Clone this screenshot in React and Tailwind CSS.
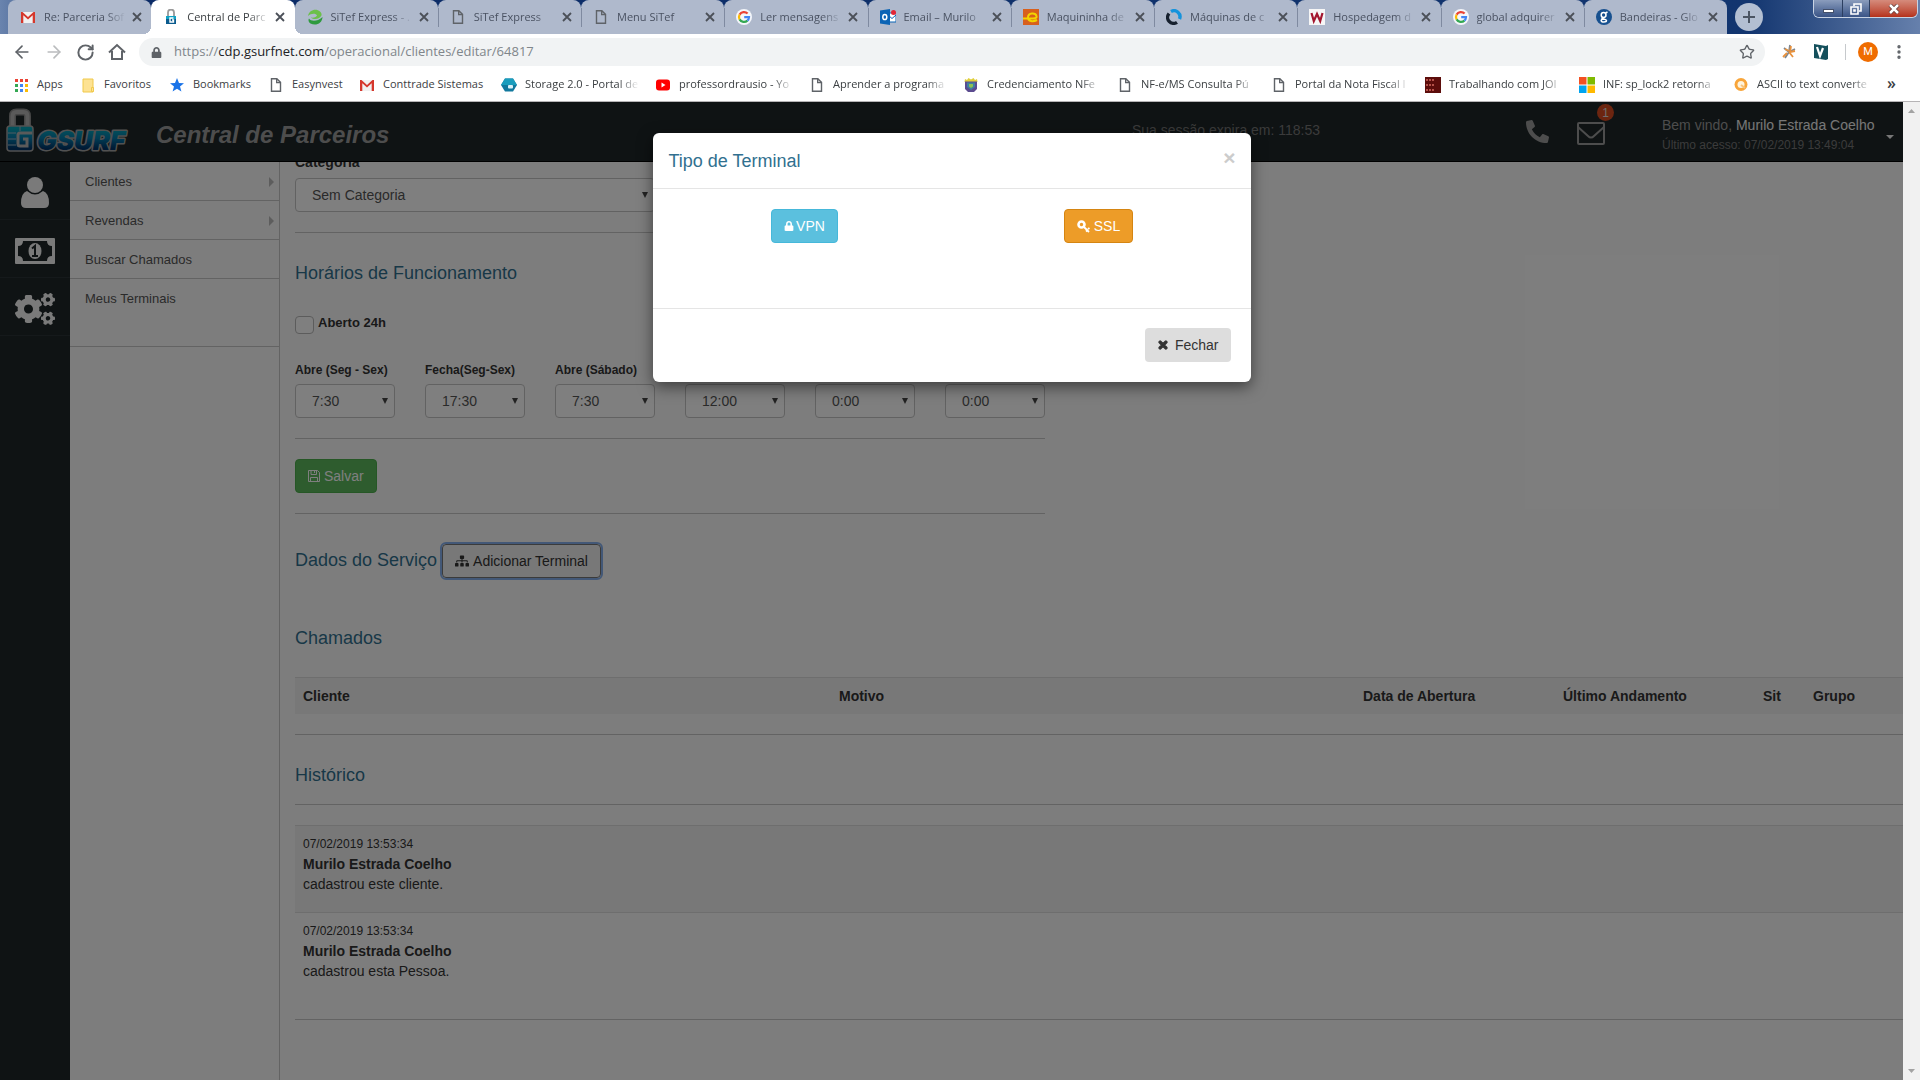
import { useState } from 'react';
import { FaUser, FaCogs, FaPhone, FaSitemap, FaLock, FaTimes } from 'react-icons/fa';
import { ArrowLeft, ArrowRight, RotateCw, Star, EllipsisVertical } from 'lucide-react';

// Favicons
const PageIcon = () => (
  <svg width="16" height="16" viewBox="0 0 16 16" fill="none" stroke="#5f6368" strokeWidth="1.4">
    <path d="M3.5 1.7h5.3l3.7 3.7v8.9h-9z" />
    <path d="M8.7 1.7v3.9h3.8" />
  </svg>
);

const GmailIcon = () => (
  <svg width="16" height="16" viewBox="0 0 16 16">
    <path d="M1 3h14v11H1z" fill="#f1f1f1" />
    <path d="M1 14V3h1.5L8 8l5.5-5H15v11h-2.3V6.3L8 10.5 3.3 6.3V14z" fill="#d5372c" />
  </svg>
);

const GoogleIcon = () => (
  <svg width="16" height="16" viewBox="0 0 16 16">
    <circle cx="8" cy="8" r="8" fill="#f4f6fa" />
    <g fill="none" strokeWidth="2.2">
      <path d="M11.6 4.6A5 5 0 0 0 3.6 5.6" stroke="#ea4335" />
      <path d="M3.6 5.6a5 5 0 0 0 0 4.8" stroke="#fbbc05" />
      <path d="M3.6 10.4a5 5 0 0 0 7.8 1.2" stroke="#34a853" />
      <path d="M11.4 11.6A5 5 0 0 0 13 8.2H8.2" stroke="#4285f4" />
    </g>
  </svg>
);

const PadlockIcon = () => (
  <svg width="16" height="16" viewBox="0 0 16 16">
    <path d="M5 7V3.5a3 3 0 0 1 6 0V7" fill="none" stroke="#9a9a9a" strokeWidth="1.8" />
    <path d="M3 7h10v8H3z" fill="#0b5b8e" />
    <path d="M3 7h10v3H3z" fill="#11a2c4" />
    <path d="M10.5 9H7v4h3.5v-2H9" fill="none" stroke="#fff" strokeWidth="1.4" />
  </svg>
);

const SitefIcon = () => (
  <svg width="16" height="16" viewBox="0 0 16 16">
    <path d="M1 7C2 1 9-1 13 2.500c2.500 2.500 2 4.500-1 6.500-2.500 1.500-6 1.500-8-.5 3 .5 5.500-.5 6-2C9 4 4 4 1 7z" fill="#6cc04a" />
    <path d="M15.500 8C15.500 14 9 17.500 3.500 14.500 1.500 13 1 11 2 9.500c2 3 8 3.500 13.500-1.500z" fill="#2f9a3f" />
  </svg>
);

const OutlookIcon = () => (
  <svg width="16" height="16" viewBox="0 0 16 16">
    <path d="M8 4h8v9H8z" fill="#fff" stroke="#0b64b5" />
    <path d="M8 6l4 3.500L16 6" fill="none" stroke="#0b64b5" />
    <path d="M0 1.500L10 0v16L0 14.500z" fill="#0b64b5" />
    <ellipse cx="4.800" cy="8" rx="2" ry="2.600" fill="none" stroke="#fff" strokeWidth="1.500" />
    <circle cx="13.500" cy="3.500" r="2.500" fill="#e32636" />
  </svg>
);

const MaquininhaIcon = () => (
  <svg width="16" height="16" viewBox="0 0 16 16">
    <path d="M0 0h16v16H0z" fill="#d8601c" />
    <path d="M0 9.500h10c3 0 4-1 3.500-2.500C12.500 3.500 5 3.500 5 8.500c0 4 5 4.500 9 2.500" fill="none" stroke="#f2d400" strokeWidth="2" />
  </svg>
);

const RingIcon = () => (
  <svg width="16" height="16" viewBox="0 0 16 16" fill="none" strokeWidth="3.400">
    <path d="M5 2.500A6 6 0 0 1 13.500 10" stroke="#1593dc" />
    <path d="M3 4.500A6 6 0 0 0 11 13.300" stroke="#16202e" />
  </svg>
);

const HostIcon = () => (
  <svg width="16" height="16" viewBox="0 0 16 16">
    <path d="M0 0h16v16H0z" fill="#f6f6f6" />
    <path d="M2.500 4l2.300 8L8 5l3.200 7 2.300-8" fill="none" stroke="#a3162e" strokeWidth="2.200" />
  </svg>
);

const GlobalIcon = () => (
  <svg width="16" height="16" viewBox="0 0 16 16">
    <circle cx="8" cy="8" r="8" fill="#17508f" />
    <g fill="none" stroke="#fff" strokeWidth="1.500">
      <circle cx="7.600" cy="6" r="2.400" />
      <path d="M9.500 4l2-1M6 8.500c-1 1.800 4.500 1 4.500 3s-5.500 2-5.300.2C5.300 10.500 6.500 10 8 10" />
    </g>
  </svg>
);

const AppsIcon = () => (
  <svg width="16" height="16" viewBox="0 0 16 16">
    {["#ea4335", "#ea4335", "#ea4335", "#34a853", "#4285f4", "#fbbc05", "#34a853", "#4285f4", "#fbbc05"].map((fill, i) => (
      <rect key={i} x={2 + (i % 3) * 5} y={2 + Math.floor(i / 3) * 5} width="3" height="3" fill={fill} />
    ))}
  </svg>
);

const FolderIcon = () => (
  <svg width="16" height="16" viewBox="0 0 16 16">
    <path d="M3 2h10v13H3z" fill="#fde293" stroke="#f0c94b" />
    <path d="M11.500 10.500h2v4h-2z" fill="#fde293" stroke="#f0c94b" />
  </svg>
);

const BlueStarIcon = () => (
  <svg width="16" height="16" viewBox="0 0 16 16" fill="#1a73e8">
    <path d="M8 1l2 5 5 .3-4 3.300 1.400 5L8 11.800l-4.400 2.800 1.400-5-4-3.300L6 6z" />
  </svg>
);

const HexIcon = () => (
  <svg width="16" height="16" viewBox="0 0 16 16">
    <path d="M4 1.500h8L16 8l-4 6.500H4L0 8z" fill="#11789d" />
    <path d="M4 1.500h8L16 8H0z" fill="#1a9dbd" />
    <rect x="7" y="8" width="5" height="3.500" rx="1" fill="#d9f1f8" />
  </svg>
);

const YoutubeIcon = () => (
  <svg width="16" height="16" viewBox="0 0 16 16">
    <rect x="1" y="2.500" width="14" height="11" rx="3" fill="#f00" />
    <path d="M6.500 5.500v5l4-2.500z" fill="#fff" />
  </svg>
);

const CrestIcon = () => (
  <svg width="16" height="16" viewBox="0 0 16 16">
    <path d="M1.500 5L2 2l2 1 1.500-2L8 2.500 10.500 1 12 3l2-1 .5 3z" fill="#e0cf3c" />
    <path d="M2 4.500h12V12l-3 3H5l-3-3z" fill="#5b4b8f" />
    <path d="M4 5.500h8V10l-4 3-4-3z" fill="#3f7fa0" />
    <path d="M6 7h4v2.500L8 11 6 9.500z" fill="#8cc152" />
  </svg>
);

const SqlIcon = () => (
  <svg width="16" height="16" viewBox="0 0 16 16">
    <path d="M0 0h16v16H0z" fill="#5c0d0b" />
    <path d="M1 3h8M1 8h9M1 13h8" stroke="#b5524a" strokeWidth="2" strokeDasharray="2 1" />
  </svg>
);

const WindowsIcon = () => (
  <svg width="16" height="16" viewBox="0 0 16 16">
    <path d="M0 0h7.500v7.500H0z" fill="#f25022" />
    <path d="M8.500 0H16v7.500H8.500z" fill="#7fba00" />
    <path d="M0 8.500h7.500V16H0z" fill="#00a4ef" />
    <path d="M8.500 8.500H16V16H8.500z" fill="#ffb900" />
  </svg>
);

const AsciiIcon = () => (
  <svg width="16" height="16" viewBox="0 0 16 16">
    <circle cx="8" cy="7.500" r="6.500" fill="#f8a53a" />
    <circle cx="8" cy="7.500" r="3.500" fill="#fff3dc" />
    <path d="M8 8l4 3" stroke="#f8c37a" strokeWidth="2" />
  </svg>
);

const tabs = [
  { title: "Re: Parceria Sof", icon: GmailIcon },
  { title: "Central de Parc", icon: PadlockIcon, active: true },
  { title: "SiTef Express - .", icon: SitefIcon },
  { title: "SiTef Express", icon: PageIcon, divider: true },
  { title: "Menu SiTef", icon: PageIcon, divider: true },
  { title: "Ler mensagens", icon: GoogleIcon, divider: true },
  { title: "Email – Murilo", icon: OutlookIcon, divider: true },
  { title: "Maquininha de", icon: MaquininhaIcon, divider: true },
  { title: "Máquinas de c", icon: RingIcon, divider: true },
  { title: "Hospedagem d", icon: HostIcon, divider: true },
  { title: "global adquirer", icon: GoogleIcon, divider: true },
  { title: "Bandeiras - Glo", icon: GlobalIcon, divider: true },
];

const bookmarks = [
  { title: "Apps", icon: AppsIcon, width: "w-[67px]" },
  { title: "Favoritos", icon: FolderIcon, width: "w-[89px]" },
  { title: "Bookmarks", icon: BlueStarIcon, width: "w-[99px]" },
  { title: "Easynvest", icon: PageIcon, width: "w-[91px]" },
  { title: "Conttrade Sistemas", icon: GmailIcon, width: "w-[142px]" },
  { title: "Storage 2.0 - Portal de", icon: HexIcon, width: "w-[154px]", fade: true },
  { title: "professordrausio - Yo", icon: YoutubeIcon, width: "w-[154px]", fade: true },
  { title: "Aprender a programa", icon: PageIcon, width: "w-[154px]", fade: true },
  { title: "Credenciamento NFe", icon: CrestIcon, width: "w-[154px]", fade: true },
  { title: "NF-e/MS Consulta Pú", icon: PageIcon, width: "w-[154px]", fade: true },
  { title: "Portal da Nota Fiscal I", icon: PageIcon, width: "w-[154px]", fade: true },
  { title: "Trabalhando com JOI", icon: SqlIcon, width: "w-[154px]", fade: true },
  { title: "INF: sp_lock2 retorna", icon: WindowsIcon, width: "w-[154px]", fade: true },
  { title: "ASCII to text converte", icon: AsciiIcon, width: "w-[146px]", fade: true },
];

const menuItems = [
  { title: "Clientes", submenu: true },
  { title: "Revendas", submenu: true },
  { title: "Buscar Chamados" },
  { title: "Meus Terminais" },
];

const hours = [
  { label: "Abre (Seg - Sex)", value: "7:30" },
  { label: "Fecha(Seg-Sex)", value: "17:30" },
  { label: "Abre (Sábado)", value: "7:30" },
  { label: "Fecha (Sábado)", value: "12:00" },
  { label: "Abre (Domingo)", value: "0:00" },
  { label: "Fecha (Domingo)", value: "0:00" },
];

const history = [
  { date: "07/02/2019 13:53:34", user: "Murilo Estrada Coelho", text: "cadastrou este cliente." },
  { date: "07/02/2019 13:53:34", user: "Murilo Estrada Coelho", text: "cadastrou esta Pessoa." },
];

function TabStrip() {
  return (
    <div className="flex h-[34px] items-start bg-[linear-gradient(to_right,#6a84ae,#0a2a66_5%,#12356f_91%,#6680ac)]">
      <div className="flex w-[1727px] min-w-0 pl-2">
        {tabs.map((tab) => (
          <div
            key={tab.title}
            className={`relative flex h-[34px] min-w-0 flex-1 items-center rounded-t-lg pl-3 ${
              tab.active
                ? "z-10 bg-white text-[#3c4043] before:absolute before:bottom-0 before:-left-2 before:size-2 before:bg-[radial-gradient(circle_at_0_0,transparent_8px,#fff_8px)] after:absolute after:-right-2 after:bottom-0 after:size-2 after:bg-[radial-gradient(circle_at_100%_0,transparent_8px,#fff_8px)]"
                : "bg-[#afb9cc] text-[#4a5262]"
            }`}
          >
            {tab.divider && <span className="absolute left-0 top-2 h-[19px] w-px bg-[#7f8aa0]" />}
            <span className="shrink-0"><tab.icon /></span>
            <span className="ml-2 w-[82px] overflow-hidden whitespace-nowrap [mask-image:linear-gradient(to_right,black_75%,transparent)]">
              {tab.title}
            </span>
            <button aria-label="Fechar guia" className="ml-1.5">
              <svg width="10" height="10" viewBox="0 0 10 10" stroke="#4b5058" strokeWidth="1.800">
                <path d="M1 1l8 8M9 1l-8 8" />
              </svg>
            </button>
          </div>
        ))}
      </div>
      <button aria-label="Nova guia" className="ml-2 mt-[3px] flex size-7 shrink-0 items-center justify-center rounded-full bg-[#b3bfd2]">
        <svg width="14" height="14" viewBox="0 0 14 14" stroke="#4b5563" strokeWidth="2">
          <path d="M7 1v12M1 7h12" />
        </svg>
      </button>
      <div className="ml-auto mr-[2px] flex h-[18px] shrink-0 overflow-hidden rounded-b-md border border-t-0 border-[#c8d3e4]">
        <button aria-label="Minimizar" className="flex w-[29px] items-center justify-center border-r border-[#2c3f61] bg-linear-to-b from-[#8b9dbd] to-[#3a5486]">
          <span className="mt-1 h-[4px] w-[11px] border border-[#44506a] bg-white" />
        </button>
        <button aria-label="Restaurar" className="flex w-[27px] items-center justify-center border-r border-[#2c3f61] bg-linear-to-b from-[#8b9dbd] to-[#3a5486]">
          <svg width="12" height="12" viewBox="0 0 12 12" fill="none" stroke="#fff" strokeWidth="1.600">
            <path d="M4 3V1h7v7H9M1 4h7v7H1zM4 7h1v1H4z" />
          </svg>
        </button>
        <button aria-label="Fechar" className="flex w-[47px] items-center justify-center bg-linear-to-b from-[#d58b7c] to-[#b5301a]">
          <svg width="12" height="10" viewBox="0 0 12 10">
            <path d="M2 1l8 8M10 1L2 9" stroke="#5b3433" strokeWidth="4" />
            <path d="M2 1l8 8M10 1L2 9" stroke="#fff" strokeWidth="2.500" />
          </svg>
        </button>
      </div>
    </div>
  );
}

function Toolbar() {
  const [url, setUrl] = useState("https://cdp.gsurfnet.com/operacional/clientes/editar/64817");
  const [editing, setEditing] = useState(false);

  return (
    <div className="flex h-9 items-center bg-white pl-3 text-[#5f6368]">
      <div className="flex gap-3">
        <button aria-label="Voltar"><ArrowLeft size={20} /></button>
        <button aria-label="Avançar" className="text-[#babcbe]"><ArrowRight size={20} /></button>
        <button aria-label="Recarregar"><RotateCw size={19} strokeWidth={2.5} /></button>
        <button aria-label="Página inicial">
          <svg width="20" height="20" viewBox="0 0 20 20" fill="none" stroke="currentColor" strokeWidth="2">
            <path d="M2 10.500L10 3l8 7.500M5 9v8h10V9" />
          </svg>
        </button>
      </div>
      <div className="ml-3 flex h-7 flex-1 items-center rounded-full bg-[#f1f3f4] pl-3">
        <FaLock size={11} />
        {editing ? (
          <input
            aria-label="Endereço"
            autoFocus
            value={url}
            onChange={(e) => setUrl(e.target.value)}
            onBlur={() => setEditing(false)}
            className="ml-3 flex-1 bg-transparent text-[13px] outline-none"
          />
        ) : (
          <button onClick={() => setEditing(true)} className="ml-3 flex-1 text-left text-[13px] text-[#80868b]">
            https://<span className="text-[#202124]">cdp.gsurfnet.com</span>/operacional/clientes/editar/64817
          </button>
        )}
        <button aria-label="Adicionar aos favoritos" className="mr-2.5"><Star size={16} /></button>
      </div>
      <div className="flex w-[155px] items-center pl-4">
        <svg width="16" height="16" viewBox="0 0 16 16" fill="none" strokeWidth="1.800">
          <path d="M9 1L8 8 3 4M8 8l6-3M8 8l-4 6" stroke="#7d8791" />
          <path d="M10 2L9 8l5-1M8 8l4 5M6 9l-4 4M4 5l4 2" stroke="#e8913c" />
        </svg>
        <svg width="16" height="18" viewBox="0 0 16 18" className="ml-4">
          <path d="M1 1l12 2 2-1v14l-2 1-12-2z" fill="#14505c" />
          <path d="M4 4l3 9 3-8" fill="none" stroke="#fff" strokeWidth="2.200" />
        </svg>
        <span className="ml-4 h-4 w-px bg-[#c6c9cc]" />
        <button className="ml-3 flex size-5 items-center justify-center rounded-full bg-[#ef6c00] font-[Roboto] text-[11px] text-white">M</button>
        <button aria-label="Menu" className="ml-3"><EllipsisVertical size={18} strokeWidth={2.500} /></button>
      </div>
    </div>
  );
}

function BookmarksBar() {
  return (
    <nav className="flex h-8 items-center border-b border-[#b6b4b6] bg-white pb-0.5 pl-[13px] text-[#3c4043]">
      {bookmarks.map((item) => (
        <a key={item.title} href="#" className={`flex shrink-0 items-center ${item.width}`}>
          <span className="flex w-4 shrink-0 justify-center"><item.icon /></span>
          <span
            className={`ml-2 whitespace-nowrap ${
              item.fade ? "w-[114px] overflow-hidden [mask-image:linear-gradient(to_right,black_82%,transparent)]" : ""
            }`}
          >
            {item.title}
          </span>
        </a>
      ))}
      <button aria-label="Mais favoritos" className="ml-2 pb-1 text-base font-semibold leading-4">»</button>
    </nav>
  );
}

function Logo() {
  return (
    <svg width="128" height="48" viewBox="0 0 128 48" role="img" aria-label="GSURF">
      <defs>
        <linearGradient id="gsurf" gradientUnits="userSpaceOnUse" x1="0" y1="18" x2="0" y2="43">
          <stop offset="0.1" stopColor="#04a4b8" />
          <stop offset="0.5" stopColor="#0478a8" />
          <stop offset="0.9" stopColor="#003468" />
        </linearGradient>
      </defs>
      <path d="M6.500 19V8q0-4 4-4h7q4 0 4 4v11" fill="none" stroke="#8c8c8c" strokeWidth="7" />
      <path d="M6.500 19V8q0-4 4-4h7q4 0 4 4v11" fill="none" stroke="#b4b4b4" strokeWidth="4" />
      <rect x="1" y="18" width="26" height="25" rx="3" fill="url(#gsurf)" stroke="#a3a3a3" strokeWidth="1.500" />
      <path d="M2 25h8M2 31h8M2 37h8M14 18v5" stroke="#9fb6c4" strokeWidth="1" />
      <path d="M26 25H14q-2 0-2 2v9q0 2 2 2h7v-7h-4" fill="none" stroke="#b4b4b4" strokeWidth="3" />
      <text
        x="31"
        y="42"
        fontFamily="Inter, sans-serif"
        fontSize="26"
        fontWeight="900"
        fontStyle="italic"
        fill="url(#gsurf)"
        stroke="#a3a3a3"
        strokeWidth="3"
        strokeLinejoin="round"
        paintOrder="stroke"
      >
        GSURF
      </text>
    </svg>
  );
}

function Header() {
  return (
    <header className="flex h-15 shrink-0 items-center border-b border-black bg-[#1e2628] pr-[9px] text-[#9a9a9a]">
      <div className="flex w-[156px] pl-[6px]"><Logo /></div>
      <h1 className="pt-1.5 text-2xl font-bold italic leading-8">Central de Parceiros</h1>
      <p className="ml-auto w-[394px] pb-1 text-sm text-[#777]">Sua sessão expira em: 118:53</p>
      <a href="#" aria-label="Telefone"><FaPhone size={23} className="-scale-x-100" /></a>
      <a href="#" aria-label="Mensagens" className="relative ml-7 mt-1">
        <svg width="28" height="23" viewBox="0 0 28 23" fill="none" stroke="currentColor" strokeWidth="2">
          <rect x="1" y="1" width="26" height="21" rx="1" />
          <path d="M1 5l10 9c2 2 4 2 6 0l10-9" />
        </svg>
        <span className="absolute -top-[18px] left-5 flex size-[17px] items-center justify-center rounded-full bg-[#d84a20] text-xs text-[#ddd]">1</span>
      </a>
      <button className="ml-[57px] flex items-center gap-1.5 pt-1.5 text-left">
        <span className="w-[218px]">
          <span className="block text-sm leading-5">Bem vindo, <span className="text-[#eee]">Murilo Estrada Coelho</span></span>
          <span className="block text-xs leading-5 text-[#777]">Último acesso: 07/02/2019 13:49:04</span>
        </span>
        <svg width="8" height="4" viewBox="0 0 8 4" fill="#eee" className="mt-1"><path d="M0 0h8L4 4z" /></svg>
      </button>
    </header>
  );
}

function Sidebar() {
  return (
    <>
      <nav className="flex w-[70px] shrink-0 flex-col bg-[#1e2628] text-[#f4f4f4]">
        <a href="#" aria-label="Clientes" className="flex h-[58px] items-center justify-center border-b border-[#2b3336] pt-1">
          <svg width="28" height="32" viewBox="0 0 28 32" fill="currentColor">
            <circle cx="14" cy="8" r="8" />
            <path d="M6 14q8 7 16 0 6 2 6 12 0 5-5 5H5q-5 0-5-5 0-10 6-12z" />
          </svg>
        </a>
        <a href="#" aria-label="Financeiro" className="flex h-[58px] items-center justify-center border-b border-[#2b3336] pt-1">
          <svg width="40" height="26" viewBox="0 0 40 26">
            <rect width="40" height="26" rx="1" fill="currentColor" />
            <path d="M8 3h24q0 5 5 5v10q-5 0-5 5H8q0-5-5-5V8q5 0 5-5z" fill="#1e2628" />
            <ellipse cx="20" cy="13" rx="6.500" ry="8" fill="currentColor" />
            <path d="M17 10.500l3-2.500v9.500M17 18h6" fill="none" stroke="#1e2628" strokeWidth="2" />
          </svg>
        </a>
        <a href="#" aria-label="Configurações" className="flex h-[58px] items-center justify-center border-b border-[#2b3336] pt-1">
          <FaCogs size={40} />
        </a>
      </nav>
      <nav className="w-[210px] shrink-0 border-r border-[#c6c6c6] text-[13px] text-[#555]">
        <ul className="h-[185px] border-b border-[#c6c6c6]">
          {menuItems.map((item) => (
            <li key={item.title} className="h-[39px] border-b border-[#c6c6c6] last:border-0">
              <a href="#" className="flex h-full items-center justify-between pl-[15px] pr-[5px] pt-px">
                {item.title}
                {item.submenu && (
                  <svg width="5" height="10" viewBox="0 0 5 10" fill="#bbb"><path d="M0 0l5 5-5 5z" /></svg>
                )}
              </a>
            </li>
          ))}
        </ul>
      </nav>
    </>
  );
}

function SelectBox({ id, value, width }) {
  return (
    <div className={`relative ${width}`}>
      <select id={id} defaultValue={value} className="h-[34px] w-full appearance-none rounded-sm border border-[#c4c4c4] bg-white pl-4 text-sm text-[#555]">
        <option>{value}</option>
      </select>
      <svg width="6" height="6" viewBox="0 0 6 6" fill="#444" className="pointer-events-none absolute right-[7px] top-[14px]">
        <path d="M0 0h6L3 6z" />
      </svg>
    </div>
  );
}

function Content() {
  return (
    <main className="min-w-0 flex-1 overflow-hidden pl-[15px] pb-12 text-[#333]">
      <form className="w-[750px]" onSubmit={(e) => e.preventDefault()}>
        <label htmlFor="categoria" className="-mt-2.5 block text-sm font-bold leading-5">Categoria</label>
        <div className="mt-1.5"><SelectBox id="categoria" value="Sem Categoria" width="w-[360px]" /></div>
        <hr className="mt-5 border-[#c6c6c6]" />

        <h2 className="mt-7 text-lg leading-6 text-[#31708f]">Horários de Funcionamento</h2>
        <div className="mt-7 flex h-[21px] items-start gap-1">
          <input id="aberto" type="checkbox" className="mt-[3px] h-[18px] w-[19px] appearance-none rounded-sm border border-[#b8b8b8] bg-white checked:bg-[#31708f]" />
          <label htmlFor="aberto" className="text-[13px] font-bold leading-5">Aberto 24h</label>
        </div>
        <div className="mt-[26px] flex gap-[30px]">
          {hours.map((hour) => (
            <div key={hour.label} className="w-[100px]">
              <label htmlFor={hour.label} className="mb-1 block whitespace-nowrap text-xs font-bold leading-5">{hour.label}</label>
              <SelectBox id={hour.label} value={hour.value} width="w-full" />
            </div>
          ))}
        </div>
        <hr className="mt-5 border-[#c6c6c6]" />
        <button type="submit" className="mt-5 flex h-[34px] items-center gap-1 rounded-sm border border-[#4cae4c] bg-[#5cb85c] px-3 text-sm text-white">
          <svg width="12" height="12" viewBox="0 0 12 12" fill="none" stroke="currentColor">
            <path d="M.5.5h9l2 2v9H.5zM3 .5v4h5.500v-4M2.500 11.500v-4h7v4M6.500 1v2" />
          </svg>
          Salvar
        </button>
        <hr className="mt-5 border-[#c6c6c6]" />
      </form>

      <div className="mt-[30px] flex items-center gap-[5px]">
        <h2 className="pb-0.5 text-lg leading-6 text-[#31708f]">Dados do Serviço</h2>
        <button className="flex h-[34px] items-center gap-1 rounded-sm border border-[#777] bg-[#f0f0f0] px-3 text-sm outline-2 outline-[#86b0ee]">
          <FaSitemap size={14} /> Adicionar Terminal
        </button>
      </div>

      <h2 className="mt-12 text-lg leading-6 text-[#31708f]">Chamados</h2>
      <table className="mt-[27px] w-full table-fixed text-left text-sm">
        <thead>
          <tr className="h-9 border-t border-[#ddd] bg-[#f0f0f0]">
            <th className="w-1/3 px-2">Cliente</th>
            <th className="px-2">Motivo</th>
            <th className="w-[200px] px-2">Data de Abertura</th>
            <th className="w-[200px] px-2">Último Andamento</th>
            <th className="w-[50px] px-2">Sit</th>
            <th className="w-[98px] px-2">Grupo</th>
          </tr>
        </thead>
      </table>
      <hr className="mt-5 border-[#c6c6c6]" />

      <h2 className="mt-7 text-lg leading-6 text-[#31708f]">Histórico</h2>
      <hr className="mt-[17px] border-[#c6c6c6]" />
      <ul className="mt-5">
        {history.map((entry) => (
          <li key={entry.text} className="h-[87px] border-t border-[#ddd] px-2 pt-2 text-sm leading-5 odd:bg-[#f0f0f0]">
            <p className="text-xs leading-5">{entry.date}</p>
            <p className="font-bold">{entry.user}</p>
            <p>{entry.text}</p>
          </li>
        ))}
      </ul>
      <hr className="mt-5 border-[#c6c6c6]" />
    </main>
  );
}

function TerminalModal({ onClose }) {
  return (
    <div className="absolute inset-0 flex items-start justify-center bg-black/50 pt-[31px]">
      <div role="dialog" aria-labelledby="modal-title" className="w-[598px] rounded-md bg-white text-sm text-[#333] shadow-[0_5px_15px_rgba(0,0,0,0.5)]">
        <div className="flex h-14 justify-between border-b border-[#e5e5e5] pl-4 pr-[15px]">
          <h2 id="modal-title" className="pt-4 text-lg leading-6 text-[#31708f]">Tipo de Terminal</h2>
          <button onClick={onClose} aria-label="Fechar" className="h-[50px] pb-px text-[21px] font-bold leading-5 text-[#ccc]">×</button>
        </div>
        <div className="flex h-[119px] px-[5px] pt-5">
          <div className="flex-1 text-center">
            <button className="inline-flex h-[34px] items-center gap-0.5 rounded-sm border border-[#46b8da] bg-[#5bc0de] px-3 text-white">
              <FaLock size={10} /> VPN
            </button>
          </div>
          <div className="flex-1 text-center">
            <button className="inline-flex h-[34px] items-center gap-1 rounded-sm border border-[#d58512] bg-[#ed9c28] px-3 text-white">
              <svg width="13" height="13" viewBox="0 0 13 13" fill="none" stroke="currentColor">
                <circle cx="4.500" cy="4.500" r="3" strokeWidth="2.600" />
                <path d="M6.500 6.500l5.500 5.500M9 11.500l2-2M11 9l1.500-1" strokeWidth="1.800" />
              </svg>
              SSL
            </button>
          </div>
        </div>
        <div className="flex h-[74px] justify-end border-t border-[#e5e5e5] pr-5 pt-[19px]">
          <button onClick={onClose} className="flex h-[34px] items-center gap-1.5 rounded-sm bg-[#ddd] px-3">
            <FaTimes size={12} stroke="currentColor" strokeWidth={50} /> Fechar
          </button>
        </div>
      </div>
    </div>
  );
}

export default function App() {
  const [modalOpen, setModalOpen] = useState(true);

  return (
    <div className="flex min-h-screen flex-col overflow-hidden font-['Open_Sans',sans-serif] text-[11px]">
      <TabStrip />
      <Toolbar />
      <BookmarksBar />
      <div className="flex flex-1">
        <div className="relative flex min-w-0 flex-1 flex-col bg-[#fbfbfb] font-['Liberation_Sans',Arial,sans-serif]">
          <Header />
          <div className="flex flex-1">
            <Sidebar />
            <Content />
          </div>
          {modalOpen && <TerminalModal onClose={() => setModalOpen(false)} />}
        </div>
        {/* Scrollbar */}
        <div className="flex w-[17px] shrink-0 flex-col items-center justify-between bg-[#f1f1f1] py-[7px]">
          <svg width="7" height="4" viewBox="0 0 7 4" fill="#a3a3a3"><path d="M0 4h7L3.500 0z" /></svg>
          <svg width="7" height="4" viewBox="0 0 7 4" fill="#a3a3a3"><path d="M0 0h7L3.500 4z" /></svg>
        </div>
      </div>
    </div>
  );
}
